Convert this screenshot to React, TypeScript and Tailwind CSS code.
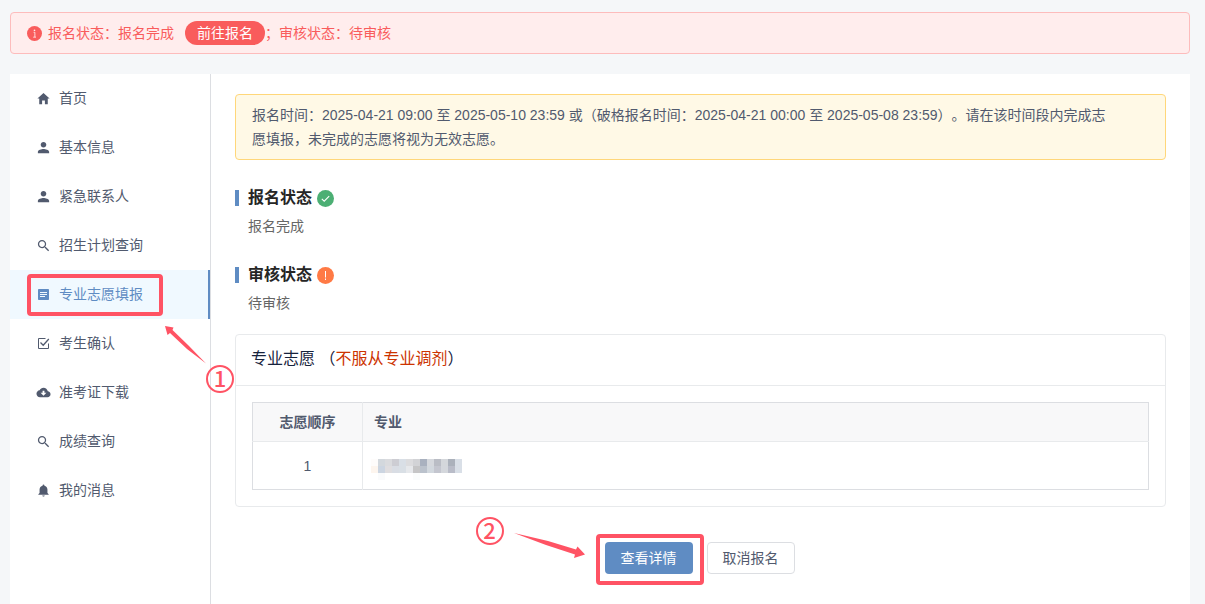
import React from "react";
import {
  IoMdHome,
  IoMdPerson,
  IoMdSearch,
  IoMdCloudDownload,
  IoMdNotifications,
} from "react-icons/io";

interface MenuItem {
  label: string;
  icon: React.ReactNode;
  active?: boolean;
}

const CheckBoxIcon: React.FC = () => (
  <svg viewBox="0 0 15 15" className="size-[15px]" fill="none" stroke="currentColor">
    <path d="M9.500 2.500H2.500v10h10V7.500" />
    <path d="M4.500 6.500l2.700 2.700 5.600-6.200" strokeWidth="1.300" />
  </svg>
);

const FormIcon: React.FC = () => (
  <svg viewBox="0 0 15 15" className="size-[15px]">
    <rect x="2" y="2" width="11" height="11" rx="0.800" fill="currentColor" />
    <path d="M4 5.500h7M4 7.500h7M4 9.500h5" stroke="#f0f9ff" strokeWidth="1" />
  </svg>
);

const MENU: MenuItem[] = [
  { label: "首页", icon: <IoMdHome /> },
  { label: "基本信息", icon: <IoMdPerson /> },
  { label: "紧急联系人", icon: <IoMdPerson /> },
  { label: "招生计划查询", icon: <IoMdSearch /> },
  { label: "专业志愿填报", icon: <FormIcon />, active: true },
  { label: "考生确认", icon: <CheckBoxIcon /> },
  { label: "准考证下载", icon: <IoMdCloudDownload /> },
  { label: "成绩查询", icon: <IoMdSearch /> },
  { label: "我的消息", icon: <IoMdNotifications /> },
];

// blurred-out major name, one row of colours per line of tiles
const TILES = [
  ["#fefcfb", "#d3d8dd", "#dadbde", "#cdcdd3", "#d9dfe6", "#dcdcde", "#d2d3d6", "#a9b1bf", "#d5d8dd", "#babdc5", "#d4d7db", "#abb1bb", "#d9dfe7"],
  ["#fdf5ee", "#ccd5e1", "#dfdddf", "#d9dde4", "#d9dfe5", "#e6e8eb", "#c5c5c6", "#bbc2cc", "#d2d8de", "#c4c6cf", "#d4d7dc", "#b9bcc8", "#d9dfe7"],
  ["#fff", "#fafbfc", "#fff", "#fff", "#fff", "#fff", "#fafcfc", "#fff", "#fff", "#fff", "#fff", "#fff", "#fff"],
];

const StatusSection: React.FC<{ title: string; text: string; icon: React.ReactNode }> = ({ title, text, icon }) => (
  <section>
    <div className="flex h-6 items-center">
      <span className="h-4 w-1 bg-[#5f8cc3]" />
      <h2 className="ml-[9px] mr-[5px] text-base leading-6 font-bold text-[#262626]">{title}</h2>
      {icon}
    </div>
    <p className="mt-1 ml-[13px] leading-6 text-[#666666]">{text}</p>
  </section>
);

const StepMark: React.FC<{ n: number; className: string }> = ({ n, className }) => (
  <span
    className={`pointer-events-none absolute z-10 flex size-7 items-center justify-center rounded-full border-2 border-[#ff5364] pb-1 font-['Noto_Sans_CJK_SC',sans-serif] text-[22px] leading-6 font-medium text-[#ff5364] ${className}`}
  >
    {n}
  </span>
);

const Sidebar: React.FC = () => (
  <nav className="w-[201px] shrink-0 border-r border-[#dcdee2]">
    {MENU.map((item) => (
      <div key={item.label} className="relative">
        <a
          href="#"
          className={`flex h-[49px] items-center gap-2 pb-0.5 pl-[26px] ${
            item.active ? "border-r-2 border-[#5f8cc3] bg-[#f0f9ff] text-[#5f8cc3]" : "text-[#515a6e]"
          }`}
        >
          <span className="pt-0.5 text-[15px]">{item.icon}</span>
          {item.label}
        </a>
        {item.active && (
          <>
            <div className="pointer-events-none absolute top-1 left-[17px] h-[42px] w-[136px] rounded-[4px] border-4 border-[#ff5364]" />
            <svg className="pointer-events-none absolute top-[55px] left-[155px]" width="42" height="40" viewBox="0 0 42 40" fill="#ff5364">
              <path d="M0 1L8.500 2.500L7.500 5L24 21L41 38.500L22 24L5 8L2.500 10Z" />
            </svg>
            <StepMark n={1} className="top-[95px] left-[196px]" />
          </>
        )}
      </div>
    ))}
  </nav>
);

export default function App() {
  return (
    <div className="flex min-h-screen flex-col gap-5 bg-[#f5f7f9] pt-3 pr-[15px] pl-2.5 font-['Liberation_Sans','Noto_Sans_CJK_SC',sans-serif] text-sm text-[#515a6e]">
      <div className="flex h-[42px] items-center rounded-[4px] border border-[#fdbcbc] bg-[#ffeded] pl-4 text-[#f95c5c]">
        <svg viewBox="0 0 16 16" className="mr-1.5 size-[15px]">
          <circle cx="8" cy="8" r="8" fill="#f95c5c" />
          <path d="M7 6.700h1.400v5M6.600 11.900h3" fill="none" stroke="#ffeded" strokeWidth="0.900" />
          <circle cx="8" cy="4.500" r="0.900" fill="#ffeded" />
        </svg>
        <span>报名状态：报名完成</span>
        <button type="button" className="ml-[11px] h-6 rounded-full bg-[#f95c5c] px-3 text-white">
          前往报名
        </button>
        <span>；审核状态：待审核</span>
      </div>

      <div className="flex flex-1 bg-white">
        <Sidebar />

        <main className="min-w-0 flex-1 px-6 pt-5">
          <div className="rounded-[4px] border border-[#ffd77a] bg-[#fff9e6] py-2 pr-12 pl-4 leading-6 [text-spacing-trim:space-all]">
            报名时间：2025-04-21 09:00 至 2025-05-10 23:59 或（破格报名时间：2025-04-21 00:00 至 2025-05-08
            23:59）。请在该时间段内完成志愿填报，未完成的志愿将视为无效志愿。
          </div>

          <div className="mt-[26px] flex flex-col gap-[25px]">
            <StatusSection
              title="报名状态"
              text="报名完成"
              icon={
                <svg viewBox="0 0 17 17" className="size-[17px]">
                  <circle cx="8.500" cy="8.500" r="8.500" fill="#4caf74" />
                  <path d="M4.800 8.900l2.400 2.300 5-5.100" fill="none" stroke="#fff" strokeWidth="1.100" />
                </svg>
              }
            />
            <StatusSection
              title="审核状态"
              text="待审核"
              icon={
                <svg viewBox="0 0 17 17" className="size-[17px]">
                  <circle cx="8.500" cy="8.500" r="8.500" fill="#ff7a45" />
                  <path d="M8.500 4v6.500M8.500 11.500v1.500" stroke="#fff" strokeWidth="1" />
                </svg>
              }
            />
          </div>

          <section className="mt-[19px] rounded-[4px] border border-[#e8eaec]">
            <h3 className="border-b border-[#e8eaec] px-[15px] pt-3 pb-3.5 text-base leading-6 text-[#17233d]">
              专业志愿 （<span className="text-[#cc3300]">不服从专业调剂</span>）
            </h3>
            <div className="p-4">
              <table className="w-full table-fixed border-collapse border border-[#dcdee2]">
                <thead>
                  <tr className="h-[39px] bg-[#f8f8f9]">
                    <th className="w-[110px] border-r border-b border-[#e8eaec] font-bold">志愿顺序</th>
                    <th className="border-b border-[#e8eaec] px-[11px] text-left font-bold">专业</th>
                  </tr>
                </thead>
                <tbody>
                  <tr className="h-12">
                    <td className="border-r border-[#e8eaec] text-center">1</td>
                    <td className="px-2">
                      <svg width="91" height="21" viewBox="0 0 91 21" className="mt-2 block" shapeRendering="crispEdges">
                        {TILES.map((row, y) =>
                          row.map((color, x) => (
                            <rect key={`${x}-${y}`} x={x * 7} y={y * 7} width="7" height="7" fill={color} />
                          ))
                        )}
                      </svg>
                    </td>
                  </tr>
                </tbody>
              </table>
            </div>
          </section>

          <div className="mt-[35px] flex justify-center gap-3.5 pr-0.5">
            <div className="relative">
              <button type="button" className="h-8 w-[88px] rounded-[4px] bg-[#5f8cc3] text-white">
                查看详情
              </button>
              <div className="pointer-events-none absolute -top-2 -left-[9px] h-[51px] w-[108px] rounded-[4px] border-4 border-[#ff5364]" />
              <svg className="pointer-events-none absolute -top-[9px] -left-[91px]" width="72" height="26" viewBox="0 0 72 26" fill="#ff5364">
                <path d="M0 0L34 8L62 16.500L63.500 13.500L71 21.500L60 25L61 21.500L32 12Z" />
              </svg>
              <StepMark n={2} className="-top-[25px] -left-[129px]" />
            </div>
            <button type="button" className="h-8 w-[88px] rounded-[4px] border border-[#dcdee2] bg-white">
              取消报名
            </button>
          </div>
        </main>
      </div>
    </div>
  );
}
